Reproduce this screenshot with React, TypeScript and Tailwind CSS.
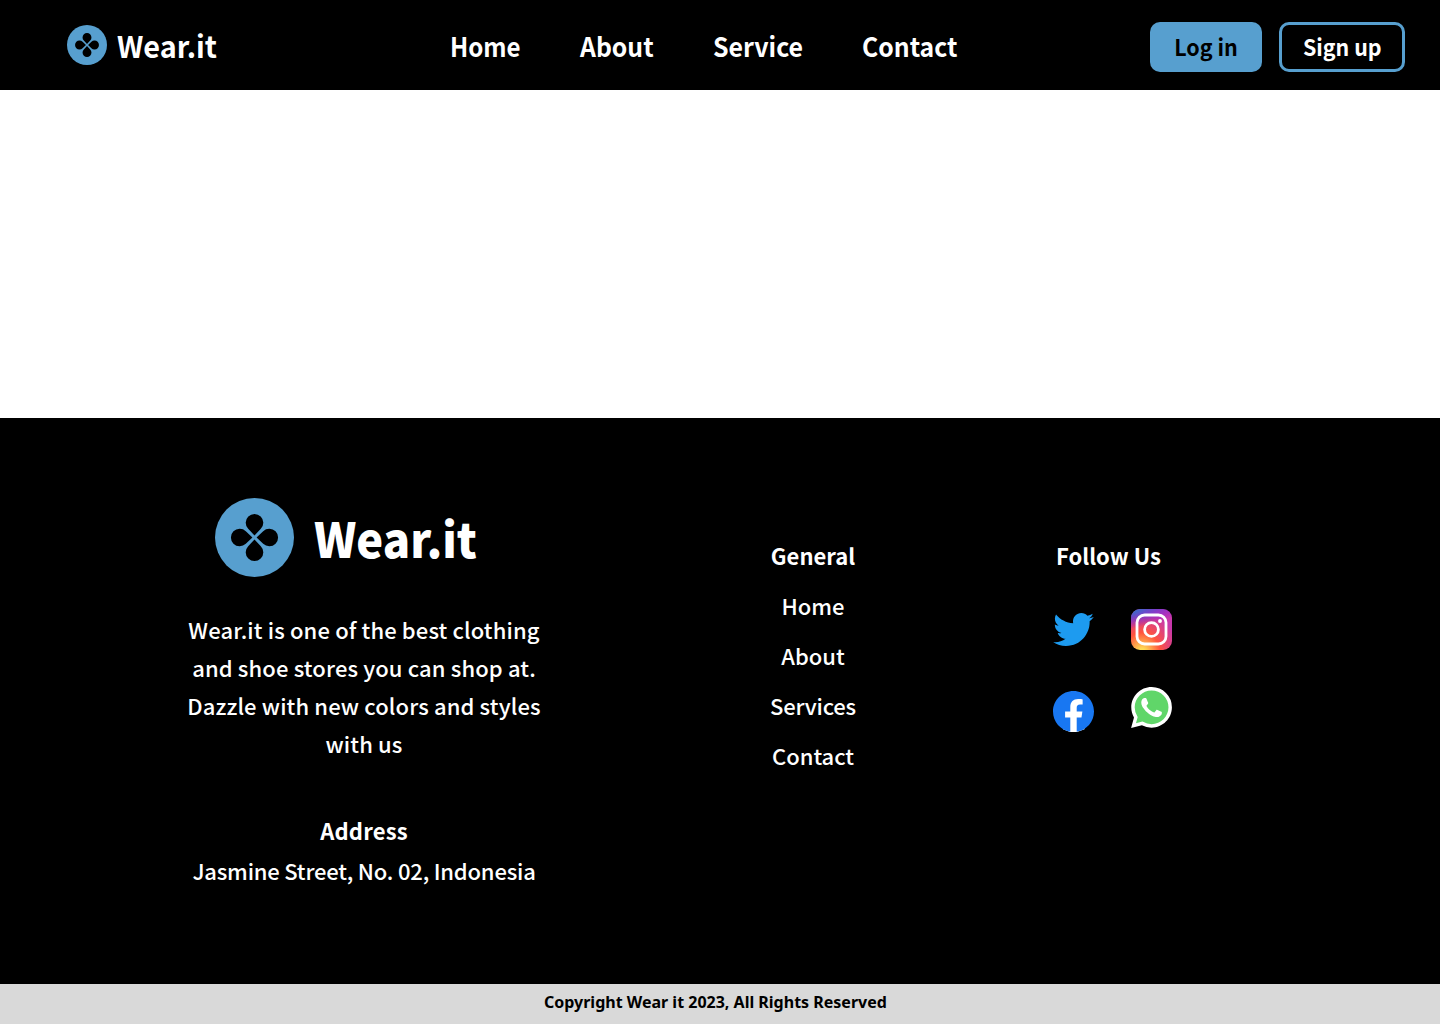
import React from "react";

function LogoMark({ className }: { className: string }) {
  const petal = "M40 37.9 L33.6 31.2 A8.9 8.9 0 1 1 46.4 31.2 Z";
  return (
    <svg viewBox="0 0 80 80" className={className} aria-hidden="true">
      <circle cx="40" cy="40" r="40" fill="#579fcf" />
      {[0, 90, 180, 270].map((angle) => (
        <path key={angle} d={petal} transform={`rotate(${angle} 40 40)`} fill="#000" />
      ))}
    </svg>
  );
}

function TwitterIcon() {
  return (
    <svg viewBox="0 48 512 416" className="h-[33px] w-[41px]" aria-label="Twitter">
      <path
        fill="#1d9bf0"
        d="M459.37 151.716c.325 4.548.325 9.097.325 13.645 0 138.72-105.583 298.558-298.558 298.558-59.452 0-114.68-17.219-161.137-47.106 8.447.974 16.568 1.299 25.34 1.299 49.055 0 94.213-16.568 130.274-44.832-46.132-.975-84.792-31.188-98.112-72.772 6.498.974 12.995 1.624 19.818 1.624 9.421 0 18.843-1.3 27.614-3.573-48.081-9.747-84.143-51.98-84.143-102.985v-1.299c13.969 7.797 30.214 12.67 47.431 13.319-28.264-18.843-46.781-51.005-46.781-87.391 0-19.492 5.197-37.36 14.294-52.954 51.655 63.675 129.3 105.258 216.365 109.807-1.624-7.797-2.599-15.918-2.599-24.04 0-57.828 46.782-104.934 104.934-104.934 30.213 0 57.502 12.67 76.67 33.137 23.715-4.548 46.456-13.32 66.599-25.34-7.798 24.366-24.366 44.833-46.132 57.827 21.117-2.273 41.584-8.122 60.426-16.243-14.292 20.791-32.161 39.308-52.628 54.253z"
      />
    </svg>
  );
}

function InstagramIcon() {
  return (
    <svg viewBox="0 0 41 41" className="size-[41px]" aria-label="Instagram">
      <defs>
        <radialGradient id="ig-warm" cx="0" cy="0" r="1" gradientUnits="userSpaceOnUse" gradientTransform="translate(11 44) rotate(-90) scale(41 36)">
          <stop offset="0" stopColor="#ffdd55" />
          <stop offset="0.1" stopColor="#ffdd55" />
          <stop offset="0.5" stopColor="#ff543e" />
          <stop offset="1" stopColor="#c837ab" />
        </radialGradient>
        <radialGradient id="ig-cool" cx="0" cy="0" r="1" gradientUnits="userSpaceOnUse" gradientTransform="translate(-7 3) rotate(79) scale(18 75)">
          <stop offset="0" stopColor="#3771c8" />
          <stop offset="0.128" stopColor="#3771c8" />
          <stop offset="1" stopColor="#6600ff" stopOpacity="0" />
        </radialGradient>
      </defs>
      <rect width="41" height="41" rx="9" fill="url(#ig-warm)" />
      <rect width="41" height="41" rx="9" fill="url(#ig-cool)" />
      <g fill="none" stroke="#fff" strokeWidth="2.8">
        <rect x="6" y="6" width="29" height="29" rx="7.6" />
        <circle cx="20.5" cy="20.5" r="6.9" />
      </g>
      <circle cx="29" cy="12" r="1.95" fill="#fff" />
    </svg>
  );
}

function FacebookIcon() {
  return (
    <svg viewBox="8 8 496 496" className="size-[41px]" aria-label="Facebook">
      <path fill="#fff" d="M130 90h260v380l-90 33q-44 3-88 0l-82-33z" />
      <path
        fill="#1877f2"
        d="M504 256C504 119 393 8 256 8S8 119 8 256c0 123.78 90.69 226.38 209.25 245V327.69h-63V256h63v-54.64c0-62.15 37-96.48 93.67-96.48 27.14 0 55.52 4.84 55.52 4.84v61h-31.28c-30.8 0-40.41 19.12-40.41 38.73V256h68.78l-11 71.69h-57.78V501C413.31 482.38 504 379.78 504 256z"
      />
    </svg>
  );
}

function WhatsAppIcon() {
  return (
    <svg viewBox="0 0 24 24" className="size-[41px]" aria-label="WhatsApp">
      <path fill="#60d669" d="M12.05 1a10.9 10.9 0 1 1-5.4 20.3L1.5 22.6l1.4-5A10.9 10.9 0 0 1 12.05 1z" />
      <path
        fill="#fff"
        d="M17.472 14.382c-.297-.149-1.758-.867-2.03-.967-.273-.099-.471-.148-.67.15-.197.297-.767.966-.94 1.164-.173.199-.347.223-.644.075-.297-.15-1.255-.463-2.39-1.475-.883-.788-1.48-1.761-1.653-2.059-.173-.297-.018-.458.13-.606.134-.133.298-.347.446-.52.149-.174.198-.298.298-.497.099-.198.05-.371-.025-.52-.075-.149-.669-1.612-.916-2.207-.242-.579-.487-.5-.669-.51-.173-.008-.371-.01-.57-.01-.198 0-.52.074-.792.372-.272.297-1.04 1.016-1.04 2.479 0 1.462 1.065 2.875 1.213 3.074.149.198 2.096 3.2 5.077 4.487.709.306 1.262.489 1.694.625.712.227 1.36.195 1.871.118.571-.085 1.758-.719 2.006-1.413.248-.694.248-1.289.173-1.413-.074-.124-.272-.198-.57-.347m-5.421 7.403h-.004a9.87 9.87 0 01-5.031-1.378l-.361-.214-3.741.982.998-3.648-.235-.374a9.86 9.86 0 01-1.51-5.26c.001-5.45 4.436-9.884 9.888-9.884 2.64 0 5.122 1.03 6.988 2.898a9.825 9.825 0 012.893 6.994c-.003 5.45-4.437 9.884-9.885 9.884m8.413-18.297A11.815 11.815 0 0012.05 0C5.495 0 .16 5.335.157 11.892c0 2.096.547 4.142 1.588 5.945L.057 24l6.305-1.654a11.882 11.882 0 005.683 1.448h.005c6.554 0 11.89-5.335 11.893-11.893a11.821 11.821 0 00-3.48-8.413z"
      />
    </svg>
  );
}

export default function App() {
  return (
    <div className="flex h-[1024px] w-[1440px] flex-col overflow-hidden bg-white font-['Noto_Sans_CJK_SC',sans-serif] whitespace-nowrap text-white">
      <header className="flex h-[90px] shrink-0 bg-black font-bold">
        <a className="ml-[67px] flex w-[383px] items-center">
          <LogoMark className="size-10" />
          <span className="ml-[10px] origin-left scale-x-[0.96] text-[30px] leading-[86px]">Wear.it</span>
        </a>
        <nav className="flex w-[700px] text-[26.5px] leading-[92px]">
          <a className="w-[130px] origin-left scale-x-[0.91]">Home</a>
          <a className="w-[133px] origin-left scale-x-[0.935]">About</a>
          <a className="w-[149px] origin-left scale-x-[0.94]">Service</a>
          <a className="origin-left scale-x-[0.935]">Contact</a>
        </nav>
        <div className="flex gap-[17px] pt-[22px] text-[23px]">
          <button className="flex h-[50px] w-[112px] items-center justify-center rounded-[10px] bg-[#579fcf] pb-[2px] text-black">
            <span className="scale-x-[0.935]">Log in</span>
          </button>
          <button className="flex h-[50px] w-[126px] items-center justify-center rounded-[10px] border-3 border-[#579fcf] pb-[2px]">
            <span className="scale-x-[0.93]">Sign up</span>
          </button>
        </div>
      </header>

      <main className="h-[328px] shrink-0" />

      <footer className="flex h-[566px] shrink-0 bg-black text-[22px]">
        <section className="ml-[164px] w-[400px] pt-20 text-center">
          <div className="flex h-[79px] items-center pl-[51px]">
            <LogoMark className="size-[79px]" />
            <span className="ml-5 origin-left scale-x-[0.943] text-[48px] leading-[79px] font-black">Wear.it</span>
          </div>
          <p className="mt-[33px] leading-[38px] font-medium tracking-[0.13px]">
            Wear.it is one of the best clothing
            <br />
            and shoe stores you can shop at.
            <br />
            Dazzle with new colors and styles
            <br />
            with us
          </p>
          <h2 className="mt-12 leading-10 font-bold tracking-[0.2px]">Address</h2>
          <p className="leading-10 font-medium tracking-[-0.2px]">Jasmine Street, No. 02, Indonesia</p>
        </section>
        <section className="ml-[149px] w-[200px] pt-[112px] text-center leading-[50px] font-medium">
          <h2 className="font-bold">General</h2>
          <ul>
            <li>Home</li>
            <li>About</li>
            <li className="tracking-[-0.2px]">Services</li>
            <li>Contact</li>
          </ul>
        </section>
        <section className="ml-[140px] pt-[112px]">
          <h2 className="pl-[3px] leading-[50px] font-bold">Follow Us</h2>
          <div className="mt-[29px] flex gap-[37px]">
            <div className="flex flex-col gap-[45px] pt-1">
              <TwitterIcon />
              <FacebookIcon />
            </div>
            <div className="flex flex-col gap-[37px]">
              <InstagramIcon />
              <WhatsAppIcon />
            </div>
          </div>
        </section>
      </footer>

      <div className="h-10 shrink-0 bg-[#d9d9d9] pl-[544px] font-['Noto_Sans',sans-serif] text-[16px] leading-[36px] font-bold text-black">
        Copyright Wear it 2023, All Rights Reserved
      </div>
    </div>
  );
}
